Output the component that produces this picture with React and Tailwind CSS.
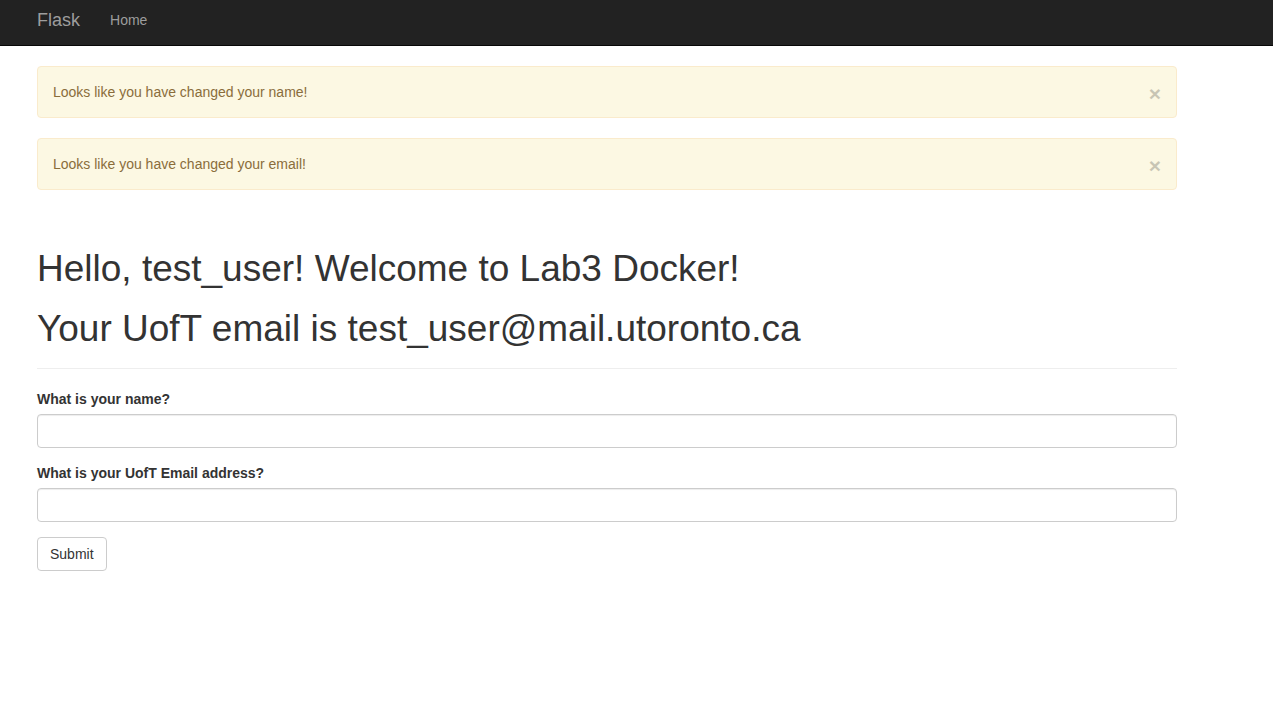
import React from 'react';

const Alert = ({ text }) => (
  <div className="relative mb-5 rounded border border-[#faebcc] bg-[#fcf8e3] py-[15px] pl-[15px] pr-[35px] text-[14px] leading-5 text-[#8a6d3b]">
    <button className="absolute right-[15px] top-[17px] text-[21px] font-bold leading-5 text-black opacity-20">×</button>
    {text}
  </div>
);

const App = () => {
  return (
    <div className="min-h-[702px] bg-white font-['Liberation_Sans',Arial,sans-serif] text-[#333]">
      {/* navbar */}
      <nav className="h-[46px] border-b border-[#080808] bg-[#222]">
        <div className="flex h-[45px] items-center pl-[37px]">
          <a className="text-[18px] leading-5 text-[#9d9d9d] mb-[5px]">Flask</a>
          <a className="ml-[30px] mb-[5px] text-[14px] leading-5 text-[#9d9d9d]">Home</a>
        </div>
      </nav>

      <div className="w-[1140px] ml-[37px] pt-5">
        <Alert text="Looks like you have changed your name!" />
        <Alert text="Looks like you have changed your email!" />

        <div className="mt-[59px] mb-5 border-b border-[#eee] pb-[9px]">
          <h1 className="mb-5 text-[37px] font-normal leading-[40px]">Hello, test_user! Welcome to Lab3 Docker!</h1>
          <h1 className="mb-[10px] text-[37px] font-normal leading-[40px]">Your UofT email is test_user@mail.utoronto.ca</h1>
        </div>

        <form className="text-[14px]">
          <div className="mb-[15px]">
            <label className="mb-[5px] block text-[14px] font-bold leading-5">What is your name?</label>
            <input type="text" className="block h-[34px] w-full rounded border border-[#ccc] px-3 shadow-[inset_0_1px_1px_rgba(0,0,0,0.075)]" />
          </div>
          <div className="mb-[15px]">
            <label className="mb-[5px] block text-[14px] font-bold leading-5">What is your UofT Email address?</label>
            <input type="text" className="block h-[34px] w-full rounded border border-[#ccc] px-3 shadow-[inset_0_1px_1px_rgba(0,0,0,0.075)]" />
          </div>
          <button type="button" className="h-[34px] rounded border border-[#ccc] bg-white px-3 text-[14px] leading-5 text-[#333]">Submit</button>
        </form>
      </div>
    </div>
  );
};

export default App;
